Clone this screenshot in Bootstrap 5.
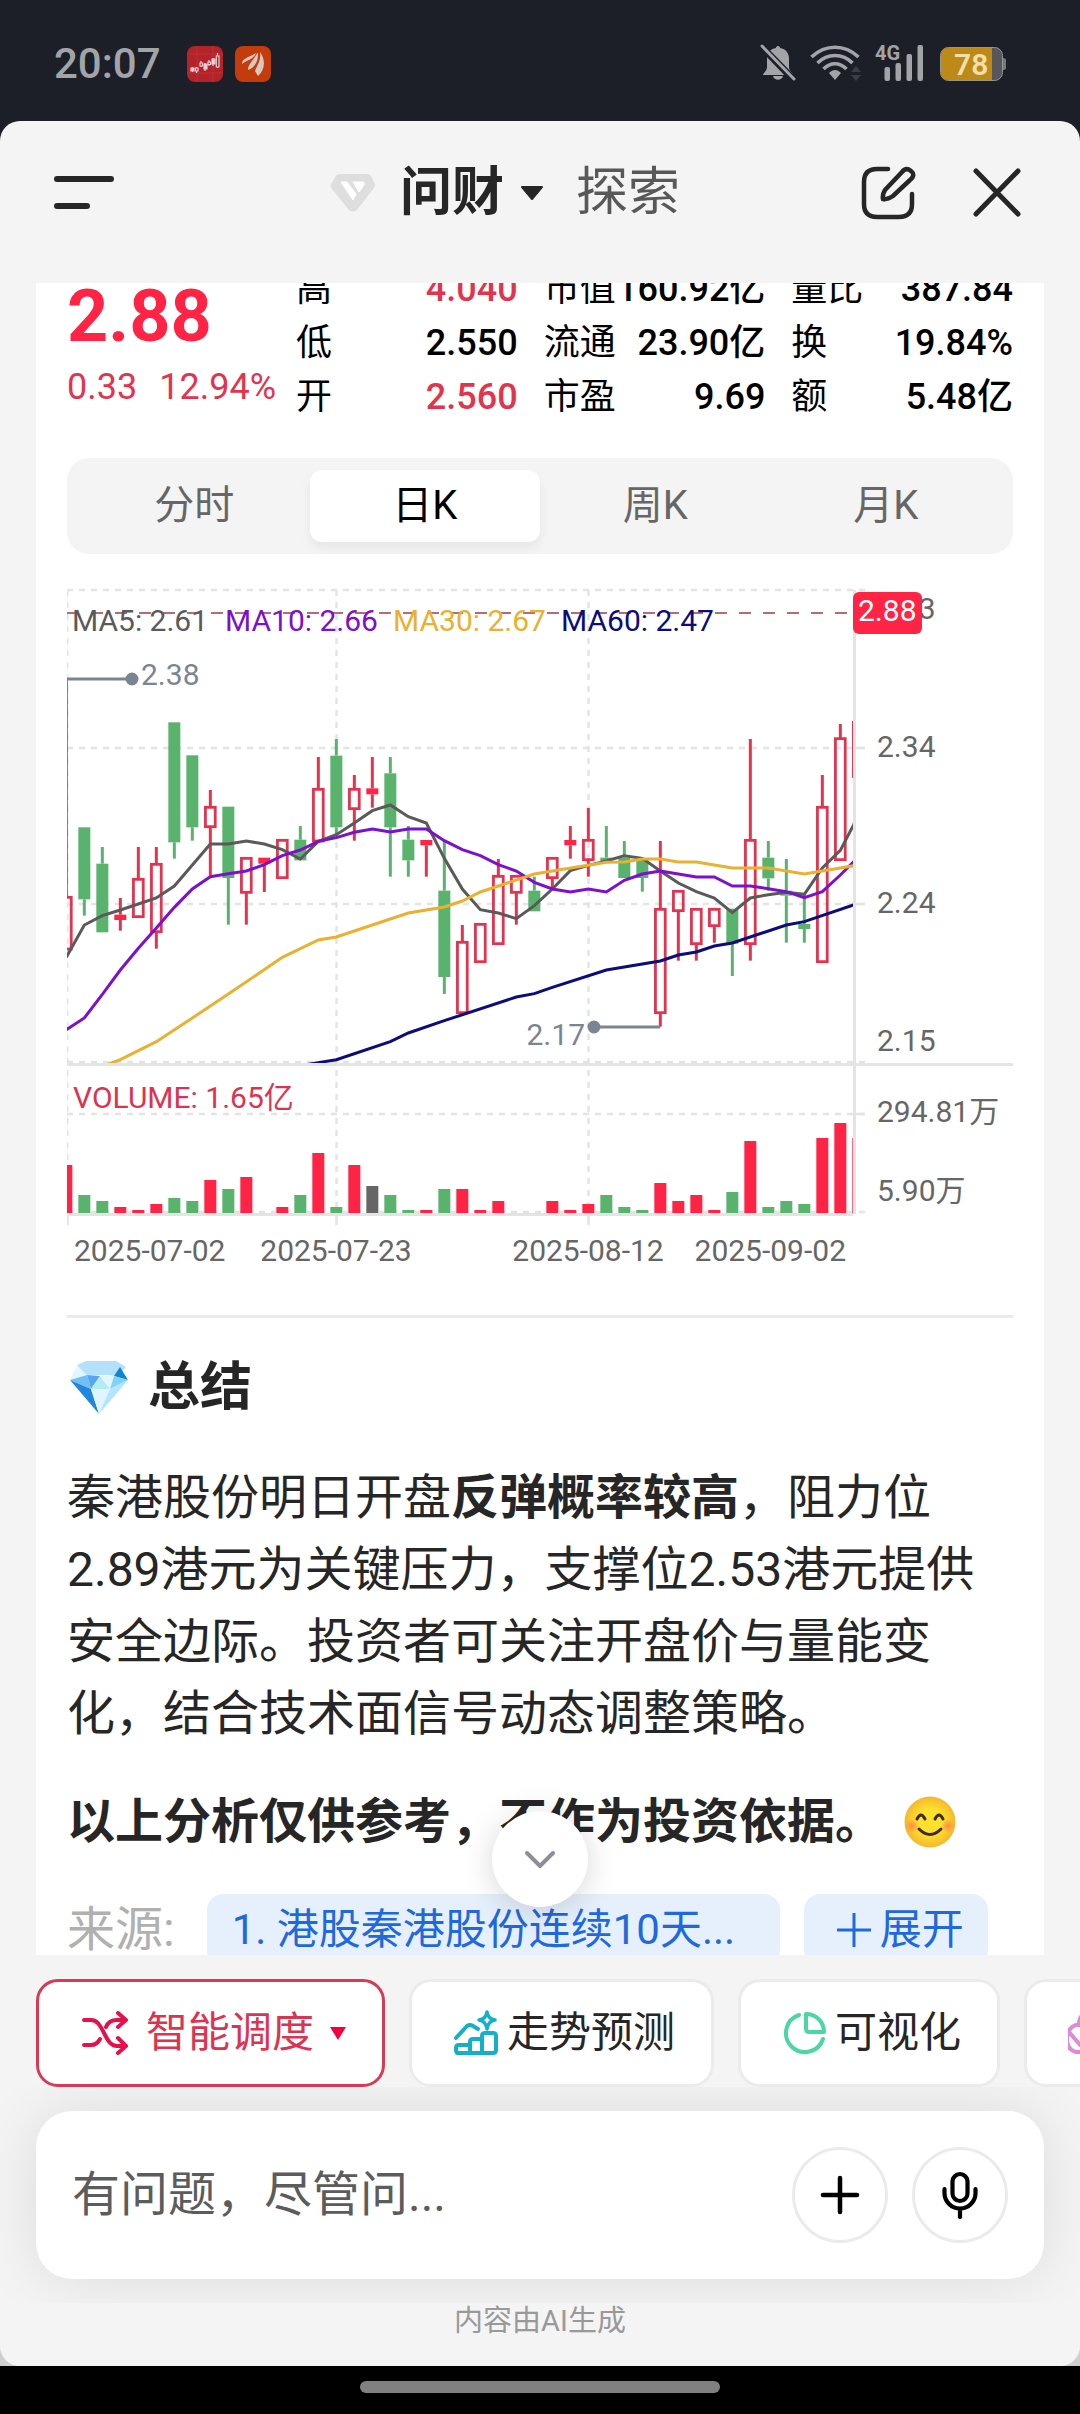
<!DOCTYPE html>
<html lang="zh-CN">
<head>
<meta charset="utf-8">
<meta name="viewport" content="width=device-width, initial-scale=1">
<title>问财</title>
<link href="https://cdn.jsdelivr.net/npm/bootstrap@5.3.0/dist/css/bootstrap.min.css" rel="stylesheet">
<style>
:root{--ink:#262626;--grey:#f4f4f4;--rise:#ff2445;--rise-line:#e2344f;--fall:#5ab36d;--rule:#e6e6e6}
body{font-family:Roboto,"Noto Sans CJK SC",sans-serif;color:var(--ink);background:#000;height:100vh}
svg{display:block;flex:none}
button{font-family:inherit}
.statusbar{height:121px;padding:6px 74px 0 54px;background:#1c1f27;color:#a3a4a8}
.clock{font-size:42px;line-height:48px;font-weight:500}
.notices{gap:26px}
.backdrop{background:linear-gradient(#1c1f27 50%,#cfcfcf 50%);min-height:0}
.sheet{background:var(--grey);border-radius:20px;min-height:0}
.topbar{height:162px;padding:0 56px 18px 54px}
.modes{padding-left:36px}
.actions{gap:52px}
.plain{border:0;background:none;padding:0;color:inherit}
.topbar .tabname{font-size:52px;line-height:60px}
.tabname.other{color:#585858}
.panel{margin:0 36px;padding:0 31px;background:#fff;min-height:0}
.scrolled{margin-top:-21px}
.quote{font-size:36px;line-height:54px;column-gap:26px;color:#000;margin-bottom:34px}
.price{flex:0 0 203px;min-width:0;padding-top:12px;color:var(--rise-line)}
.price .last{font-size:72px;line-height:86px;font-weight:700;color:var(--rise)}
.change{gap:22px}
.figures{flex:1 1 0;margin:0}
.figures dt{font-weight:400}
.figures dd{margin:0;font-weight:500}
.up{color:var(--rise-line)}
.period{background:var(--grey);border-radius:22px;padding:12px;margin-bottom:24px}
.period .nav-link{font-size:40px;line-height:48px;padding:12px 0;border:0;background:none;border-radius:12px;color:#666}
.period .nav-link.active{background:#fff;color:#000;box-shadow:0 6px 12px rgba(0,0,0,.06)}
.chart{width:100%;height:auto;font-size:30px}
.divider{height:3px;border:0;background:#ebebeb;opacity:1;margin:36px 0 32px}
.title{font-size:52px;line-height:76px;font-weight:700;margin-bottom:36px;column-gap:16px}
.prose{font-size:48px;line-height:72px;margin-bottom:36px}
.prose svg{margin-left:20px}
.sources{font-size:48px;line-height:72px;color:#b0b0b0;column-gap:24px}
.sources span{margin-right:8px}
.sources a,.sources button{font-size:42px;border-radius:16px;background:#e6f0fd;color:#1f69dd}
.sources a{flex:0 0 573px;padding:0 25px}
.sources button{padding:0 24px 0 32px;gap:8px}
.todown{width:96px;height:96px;left:calc(50% - 48px);bottom:48px;box-shadow:0 4px 32px rgba(0,0,0,.16)}
.chips{padding:24px 0 0 36px;gap:24px}
.chips button{flex:none;height:108px;font-size:42px;line-height:60px;background:#fff;border:3px solid #ebebeb;border-radius:22px;padding:0 36px 0 41px;color:var(--ink);gap:8px}
.chips button.chosen{border-color:#d73a54;color:#dc3450;gap:16px}
.composer-zone{padding:24px 36px;overflow:hidden}
.composer{height:168px;border-radius:36px;background:#fff;padding:0 36px;gap:24px;box-shadow:0 0 60px rgba(0,0,0,.1)}
.composer input{font-size:48px;line-height:72px;border:0;outline:0;min-width:0;padding:0;background:none}
.composer input::placeholder{color:#5c5c5c;opacity:1}
.composer button{width:96px;height:96px;border:3px solid #ebebeb;background:#fff}
.credit{font-size:29px;line-height:36px;color:#999;padding-bottom:27px}
.homebar{height:48px}
.homebar span{width:360px;height:12px;border-radius:6px;background:#808080;margin-bottom:6px}
</style>
<script src="https://cdn.jsdelivr.net/npm/bootstrap@5.3.0/dist/js/bootstrap.bundle.min.js" defer></script>
</head>
<body class="d-flex flex-column overflow-hidden">

<header class="statusbar d-flex align-items-center justify-content-between flex-shrink-0">
  <div class="notices d-flex align-items-center">
    <span class="clock">20:07</span>
    <svg width="84" height="36" viewBox="0 0 84 36" aria-hidden="true">
      <rect width="36" height="36" rx="8" fill="#b4232a"/>
      <path d="M10 0v36M26 0v36M0 8h36M0 27h36" stroke="#c33a40" stroke-width=".6"/>
      <g stroke="#e6cfd0" stroke-width="1.2" fill="none"><path d="M5.500 21v5M9.500 21v6M14 15v6M18 17v8M22 14v6M26 12v8M30.500 7v15"/>
      <path fill="#e6cfd0" d="M4 22h3v3H4zM17 18h3v5h-3zM25 13h3v5h-3z"/><path fill="#b4232a" d="M8.500 22h2.500v3H8.500zM13 17h2.500v3H13zM21 16h2.500v2.500H21zM29.300 10h2.700v11h-2.700z"/></g>
      <g transform="translate(48)"><rect width="36" height="36" rx="8" fill="#c43c0c"/>
      <path fill="#d9c8c0" d="M7 18C7 12 13 12 21 7C19 13 14 13 7 18zM13 24C13 18 19 14 22.500 6.500C24.500 13 20 22 13 24zM23 30L20 25C23 18 26 14 25 6C31 14 30 24 23 30z"/></g>
    </svg>
  </div>
  <svg width="246" height="40" viewBox="760 44 246 40" aria-label="静音 Wi-Fi 4G 电量78%">
    <g fill="#a3a4a8">
      <path d="M778 46c1.500 0 2 1 2 2 6 1 9 5 9 11v8c0 4 4 6 4 8h-30c0-2 4-4 4-8v-8c0-6 3-10 9-11 0-1 .5-2 2-2zM773 76h10c-1 5-9 5-10 0z"/>
      <path d="M761 46l33 34" stroke="#1c1f27" stroke-width="7"/><path d="M762 46l32 33" stroke="#a3a4a8" stroke-width="3" stroke-linecap="round"/>
      <path d="M835 80l-6-7c4-4 8-4 12 0z"/>
      <g fill="none" stroke="#a3a4a8" stroke-width="3.600"><path d="M811.500 57c14-13 33-13 47 0M817.500 63c10-10 25-10 35 0M823.500 69c7-7 16-7 23 0"/></g>
      <path fill="#3b3d43" d="M856 66l5 6h-10zM856 81l5-6h-10z"/>
      <rect x="884.500" y="67" width="5.500" height="14" rx="2"/><rect x="895.500" y="63" width="5.500" height="18" rx="2"/><rect x="906.500" y="54" width="5.500" height="27" rx="2"/><rect x="917.500" y="45" width="5.500" height="36" rx="2"/>
      <text x="875" y="60" font-size="20" font-weight="700">4G</text>
    </g>
    <rect x="940.500" y="47.500" width="62" height="33" rx="8" fill="#55575d" stroke="#96978f"/>
    <path d="M1003 58c4 0 3 3 3 6s1 6-3 6z" fill="#77787c"/>
    <path d="M948 48h44v32h-44c-5 0-7-3-7-7V55c0-4 2-7 7-7z" fill="#bd8a17"/>
    <text x="954" y="75" font-size="30" font-weight="600" fill="#f4dfa9">78</text>
  </svg>
</header>

<div class="backdrop flex-grow-1 d-flex flex-column">
<main class="sheet flex-grow-1 d-flex flex-column overflow-hidden">

  <nav class="topbar d-flex align-items-center justify-content-between flex-shrink-0">
    <button class="plain" aria-label="菜单"><svg width="60" height="60" viewBox="0 0 60 60" stroke="#262626" stroke-width="6" stroke-linecap="round"><path d="M3 16h54M3 43h30"/></svg></button>
    <div class="modes d-flex align-items-center">
      <svg class="me-4" width="46" height="40" viewBox="0 0 46 40" aria-hidden="true"><path d="M9 1h28q3 0 4 2l4 8q1 2-1 4L27 37q-4 3-8 0L1 15q-1-2 0-4l5-8q1-2 3-2z" fill="#dedede"/><path d="M11 9h6l9 12-3 6zM23 9h9q3 0 2 3l-5 7z" fill="#fff" stroke="#fff" stroke-linejoin="round"/></svg>
      <button class="plain tabname fw-bold d-flex align-items-center">问财<svg class="ms-3" width="24" height="14" viewBox="0 0 24 14" aria-hidden="true"><path d="M2 1h20L12 13z" fill="#262626" stroke="#262626" stroke-width="2" stroke-linejoin="round"/></svg></button>
      <button class="plain tabname other ms-4 ps-2">探索</button>
    </div>
    <div class="actions d-flex align-items-center">
      <button class="plain" aria-label="新建对话"><svg width="56" height="56" viewBox="0 0 56 56" fill="none" stroke="#262626" stroke-width="4.500" stroke-linecap="round"><path d="M28 4H17Q4 4 4 17v22q0 13 13 13h22q13 0 13-13V29"/><path d="M25 25L42 7q4-5 9-1t-1 9L33 31q-6 4-10 3-1-4 2-9z"/></svg></button>
      <button class="plain" aria-label="关闭"><svg width="56" height="56" viewBox="0 0 56 56" stroke="#262626" stroke-width="5" stroke-linecap="round"><path d="M8 6l42 43M50 6L8 49"/></svg></button>
    </div>
  </nav>

  <div class="position-relative flex-grow-1 d-flex flex-column" style="min-height:0">
  <section class="panel flex-grow-1 overflow-hidden">
    <div class="scrolled">
      <div class="quote d-flex text-nowrap">
        <div class="price"><div class="last">2.88</div><div class="change d-flex"><span>0.33</span><span>12.94%</span></div></div>
        <dl class="figures">
          <div class="d-flex justify-content-between"><dt>高</dt><dd class="up">4.040</dd></div>
          <div class="d-flex justify-content-between"><dt>低</dt><dd>2.550</dd></div>
          <div class="d-flex justify-content-between"><dt>开</dt><dd class="up">2.560</dd></div>
        </dl>
        <dl class="figures">
          <div class="d-flex justify-content-between"><dt>市值</dt><dd>160.92亿</dd></div>
          <div class="d-flex justify-content-between"><dt>流通</dt><dd>23.90亿</dd></div>
          <div class="d-flex justify-content-between"><dt>市盈</dt><dd>9.69</dd></div>
        </dl>
        <dl class="figures">
          <div class="d-flex justify-content-between"><dt>量比</dt><dd>387.84</dd></div>
          <div class="d-flex justify-content-between"><dt>换</dt><dd>19.84%</dd></div>
          <div class="d-flex justify-content-between"><dt>额</dt><dd>5.48亿</dd></div>
        </dl>
      </div>

      <div class="period nav nav-fill nav-justified">
        <button class="nav-link">分时</button>
        <button class="nav-link active">日K</button>
        <button class="nav-link">周K</button>
        <button class="nav-link">月K</button>
      </div>

      <svg class="chart" viewBox="67 579 946 701" role="img" aria-label="日K线图">
        <defs><clipPath id="plot"><rect x="67" y="580" width="786" height="484"/></clipPath><clipPath id="volclip"><rect x="67" y="1066" width="786" height="149"/></clipPath></defs>
        <g stroke="#e4e4e4" stroke-width="2.500" fill="none">
          <path stroke-dasharray="6 6" d="M67 591H865M67 749H865M67 905H865M67 1063H865M67 1115H865M67 1213H865"/>
          <path stroke-dasharray="6 6" d="M336.500 591V1215M588.500 591V1215"/>
          <path stroke-width="2" stroke-dasharray="6 6" d="M67.500 591V1215"/>
          <path d="M336.500 1215V1226M588.500 1215V1226M67.500 1215V1226M853 749H865M853 905H865M853 1115H865"/>
          <path stroke-width="3" d="M854.500 591V1215M67 1065.500H1013M67 1215.500H853"/>
        </g>
        <path d="M67 614H853" stroke="#b96a76" stroke-width="2" stroke-dasharray="12 12"/>
        <g id="candles" clip-path="url(#plot)"></g>
        <g id="volumes" clip-path="url(#volclip)"></g>
        <g stroke="#7a8593" stroke-width="3" fill="#7a8593"><path d="M67 680H132M594 1028H660"/><circle cx="132" cy="680" r="5"/><circle cx="594" cy="1028" r="5"/></g>
        <g fill="#7a8593"><text x="141" y="686">2.38</text><text x="585" y="1046" text-anchor="end">2.17</text></g>
        <text x="72" y="632" fill="#5a5a5a">MA5: 2.61</text>
        <text x="225" y="632" fill="#7d10cc">MA10: 2.66</text>
        <text x="393" y="632" fill="#eab02f">MA30: 2.67</text>
        <text x="561" y="632" fill="#0c0c7a">MA60: 2.47</text>
        <g fill="#666">
          <text x="877" y="620">2.43</text><text x="877" y="758">2.34</text><text x="877" y="914">2.24</text><text x="877" y="1052">2.15</text>
          <text x="877" y="1123">294.81万</text><text x="877" y="1202">5.90万</text>
          <text x="74" y="1262">2025-07-02</text><text x="336" y="1262" text-anchor="middle">2025-07-23</text><text x="588" y="1262" text-anchor="middle">2025-08-12</text><text x="846" y="1262" text-anchor="end">2025-09-02</text>
        </g>
        <text x="73" y="1109" fill="#dc3450">VOLUME: 1.65亿</text>
        <rect x="853" y="593" width="69" height="42" rx="6" fill="#ff2445"/><text x="858" y="622" fill="#fff">2.88</text>
      </svg>

      <hr class="divider">
      <h2 class="title d-flex align-items-center"><svg width="65" height="56" viewBox="0 0 65 56" aria-hidden="true"><path d="M19 1h30l10 6-8 9-11-1-12 0-9 0-9-10z" fill="#b3e1fb"/><path d="M10 6l10 9-17 5z" fill="#e3f5fe"/><path d="M53 7l8 13-14-4z" fill="#0d86cf"/><path d="M3 20l17-5 4 14z" fill="#70c0f5"/><path d="M20 15l13 1-9 13z" fill="#58a6ec"/><path d="M33 16l10 13H24z" fill="#b2ebf2"/><path d="M33 16l14 0-4 13z" fill="#e3f5fe"/><path d="M47 16l14 4-18 9z" fill="#81d1fa"/><path d="M3 20l21 9 8 25z" fill="#2186de"/><path d="M24 29h19L32 54z" fill="#e1f5fe"/><path d="M61 20l-18 9-11 25z" fill="#b3e5fc"/></svg>总结</h2>
      <p class="prose">秦港股份明日开盘<strong>反弹概率较高</strong>，阻力位2.89港元为关键压力，支撑位2.53港元提供安全边际。投资者可关注开盘价与量能变化，结合技术面信号动态调整策略。</p>
      <p class="prose fw-bold d-flex align-items-center">以上分析仅供参考，不作为投资依据。<svg width="54" height="52" viewBox="0 0 54 52" aria-label="微笑"><defs><radialGradient id="face"><stop offset=".5" stop-color="#fde030"/><stop offset="1" stop-color="#f5b82c"/></radialGradient><radialGradient id="blush"><stop stop-color="#ff7a4d" stop-opacity=".8"/><stop offset="1" stop-color="#ff7a4d" stop-opacity="0"/></radialGradient></defs><circle cx="27" cy="26" r="25.500" fill="url(#face)"/><circle cx="9" cy="30" r="7" fill="url(#blush)"/><circle cx="45" cy="30" r="7" fill="url(#blush)"/><g fill="none" stroke="#422b0d" stroke-width="3" stroke-linecap="round"><path d="M14 23q4-8 8 0M32 23q4-8 8 0M16 33q11 11 22 0"/></g></svg></p>
      <div class="sources d-flex text-nowrap">
        <span>来源:</span>
        <a class="text-decoration-none" href="#">1. 港股秦港股份连续10天...</a>
        <button class="plain d-flex align-items-center"><svg width="36" height="36" viewBox="0 0 36 36" stroke="#1f69dd" stroke-width="3"><path d="M1 18h34M18 1v34"/></svg>展开</button>
      </div>
    </div>
  </section>
  <button class="todown plain position-absolute rounded-circle bg-white d-flex align-items-center justify-content-center" aria-label="回到底部"><svg width="32" height="20" viewBox="0 0 32 20" fill="none" stroke="#8b8f98" stroke-width="4" stroke-linecap="round" stroke-linejoin="round"><path d="M3 4l13 13L29 4"/></svg></button>
  </div>

  <div class="chips d-flex flex-shrink-0 overflow-hidden text-nowrap">
    <button class="chosen d-flex align-items-center"><svg width="50" height="44" viewBox="-1 0 50 44" fill="none" stroke="#e8104a" stroke-width="4" stroke-linecap="round" stroke-linejoin="round"><path d="M3 9h7c6 0 9 5 13 13s7 13 13 13h8M37 27l8 8-8 7M3 34h7c4 0 7-2 9-6M25 16c2-5 6-7 11-7h8M37 2l8 7-8 7"/></svg><span>智能调度</span><svg width="16" height="14" viewBox="0 0 16 14"><path d="M0 1h16L8 14z" fill="#f5003c"/></svg></button>
    <button class="d-flex align-items-center"><svg width="46" height="48" viewBox="0 0 46 48" fill="none" stroke="#14b0c8" stroke-width="4" stroke-linecap="round" stroke-linejoin="round"><path d="M3 29l11-12q3-2 6 0l5 3M4 44h36q3 0 3-3V27q0-3-3-3h-8q-3 0-3 3v17M29 30h-9q-3 0-3 3v11M17 36H6q-3 0-3 3v2q0 3 3 3"/><path stroke-width="3.500" d="M34 3q1 7 8 8-7 1-8 9-1-8-8-9 7-1 8-8z"/></svg>走势预测</button>
    <button class="d-flex align-items-center"><svg width="45" height="45" viewBox="0 0 45 45" fill="none" stroke="#4cd6a4" stroke-width="4" stroke-linecap="round" stroke-linejoin="round"><path d="M17 4a19 19 0 1 0 24 24"/><path d="M24 3c10 0 18 8 18 18H27q-3 0-3-3z"/></svg>可视化</button>
    <button class="d-flex align-items-center" aria-label="更多"><svg width="46" height="46" viewBox="4 0 46 46" fill="none" stroke="#dc8bd8" stroke-width="4"><path d="M12 15h22q9 4 9 14t-9 13H12Q3 40 3 29t9-14zM5 22l12 14M15 15q0-11 8-11t8 11"/></svg></button>
  </div>

  <div class="composer-zone flex-shrink-0">
    <form class="composer d-flex align-items-center">
      <input class="flex-grow-1" type="text" aria-label="提问" placeholder="有问题，尽管问...">
      <button type="button" class="rounded-circle p-0 d-flex align-items-center justify-content-center" aria-label="添加"><svg width="42" height="42" viewBox="0 0 42 42" stroke="#000" stroke-width="4.500" stroke-linecap="round"><path d="M4 21h34M21 4v34"/></svg></button>
      <button type="button" class="rounded-circle p-0 d-flex align-items-center justify-content-center" aria-label="语音"><svg width="40" height="48" viewBox="0 0 40 48" fill="none" stroke="#000" stroke-width="4.200" stroke-linecap="round"><rect x="12.500" y="3" width="15" height="27" rx="7.500"/><path d="M4.500 18v4a15.500 15.500 0 0 0 31 0v-4M20 38v8"/></svg></button>
    </form>
  </div>
  <div class="credit text-center flex-shrink-0">内容由AI生成</div>
</main>
</div>

<footer class="homebar flex-shrink-0 d-flex align-items-center justify-content-center"><span></span></footer>

<script>
// Each candle: kind (r hollow rise, f flat rise, g fall), high, body top, body bottom, low; units are thirds of a pixel below y=570.
const candles = [
['r',330,985,1140,1140],['g',775,775,991,1040],['g',834,884,1090,1090],['f',987,1037,1053,1085],['r',834,931,1043,1043],
['r',834,886,1088,1139],['g',460,460,820,869],['g',559,559,775,815],['r',663,715,773,920],['g',713,713,927,1067],
['r',868,868,970,1067],['f',866,866,884,969],['r',814,814,926,926],['g',771,812,874,874],['r',564,661,816,816],
['g',510,560,775,800],['r',618,661,719,815],['f',564,658,676,716],['g',564,613,775,923],['g',771,812,874,923],
['f',813,813,829,923],['g',815,965,1224,1275],['r',1068,1120,1331,1331],['r',1066,1066,1178,1178],['r',870,922,1124,1124],
['r',922,922,970,1067],['g',923,965,1027,1027],['r',868,868,926,960],['f',771,813,829,869],['r',717,814,872,923],
['g',771,866,880,880],['g',816,866,927,927],['g',868,868,927,968],['r',816,1021,1331,1373],['r',967,967,1025,1175],
['r',1021,1021,1124,1175],['r',1021,1021,1070,1121],['g',1019,1019,1124,1221],['r',510,814,1124,1175],['g',816,866,928,965],
['g',870,965,980,1121],['g',975,1065,1080,1121],['r',618,715,1178,1178],['r',465,509,872,872],['r',460,460,623,623]];
const averages = {
'#5a5a5a':[[0,1165],[1,1068],[2,1040],[3,1023],[4,1005],[5,987],[6,951],[7,888],[8,825],[9,825],[10,816],[11,825],[12,842],[13,870],[14,817],[15,797],[16,762],[17,725],[18,708],[19,743],[20,762],[21,868],[22,960],[23,1022],[24,1032],[25,1049],[26,1010],[27,960],[28,905],[29,889],[30,876],[31,860],[32,868],[33,906],[34,942],[35,968],[36,987],[37,1031],[38,987],[39,977],[40,970],[41,976],[42,897],[43,844],[44,740]],
'#7d10cc':[[0,1382],[1,1347],[2,1276],[3,1203],[4,1138],[5,1077],[6,1015],[7,960],[8,923],[9,914],[10,906],[11,887],[12,860],[13,843],[14,817],[15,806],[16,790],[17,780],[18,789],[19,780],[20,780],[21,815],[22,842],[23,860],[24,887],[25,906],[26,940],[27,960],[28,969],[29,960],[30,969],[31,934],[32,915],[33,906],[34,915],[35,924],[36,924],[37,951],[38,951],[39,959],[40,968],[41,986],[42,968],[43,918],[44,864]],
'#eab02f':[[2,1492],[3,1472],[5,1418],[7,1347],[9,1275],[12,1165],[14,1113],[15,1104],[19,1032],[21,1014],[22,996],[23,969],[26,915],[27,906],[30,880],[31,879],[32,870],[33,870],[34,879],[35,879],[37,897],[39,897],[41,915],[43,897],[44,888]],
'#0c0c7a':[[13,1490],[15,1472],[18,1418],[19,1392],[21,1355],[25,1284],[26,1274],[27,1255],[30,1203],[33,1176],[34,1158],[35,1149],[36,1131],[37,1122],[40,1068],[41,1058],[44,1003]]};
// Bar heights in pixels with their colour letter.
const volumes = 'r48 g18 g12 r6 r3 r9 g15 g12 r33 g24 r36 - r6 g18 r60 g6 r48 k27 g18 g3 r3 g24 r24 r3 r12 - - r12 r3 r9 g18 g6 g3 r30 r12 r18 r3 g21 r72 g6 g12 g9 r75 r90 r75'.split(' ');
const cx = i => 66.33 + 18 * i, cy = v => 570 + v / 3;
let out = '';
candles.forEach(([k,h,t,b,l], i) => {
  const x = cx(i), c = k === 'g' ? '#5ab36d' : '#e2344f';
  const wick = (a, z) => z > a ? `<path d="M${x} ${cy(a)}V${cy(z)}" stroke="${c}" stroke-width="3"/>` : '';
  out += wick(h, t) + wick(b, l);
  out += k === 'r' ? `<rect x="${x-4.9}" y="${cy(t)}" width="9.800" height="${(b-t)/3}" fill="none" stroke="${c}" stroke-width="2.800"/>`
                   : `<rect x="${x-6}" y="${cy(t)}" width="12" height="${(b-t)/3}" fill="${k === 'g' ? c : '#ff2445'}"/>`;
});
for (const [c, pts] of Object.entries(averages))
  out += `<polyline fill="none" stroke="${c}" stroke-width="3" points="${pts.map(([i,v]) => cx(i)+','+cy(v)).join(' ')}"/>`;
document.getElementById('candles').innerHTML = out;
document.getElementById('volumes').innerHTML = volumes.map((v, i) => {
  if (v === '-') return '';
  const h = +v.slice(1), c = {r:'#ff2445', g:'#5ab36d', k:'#666'}[v[0]];
  return `<rect x="${cx(i)-6}" y="${1214-h}" width="12" height="${h}" fill="${c}"/>`;
}).join('');
</script>
</body>
</html>
